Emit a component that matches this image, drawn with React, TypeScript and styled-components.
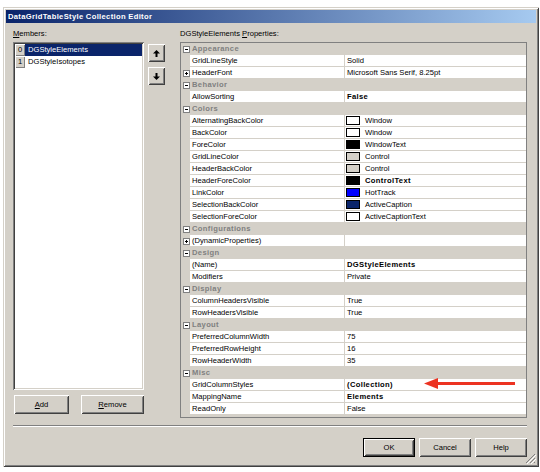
import React from "react";
import styled, { createGlobalStyle, css } from "styled-components";

const GlobalStyle = createGlobalStyle`
  html, body { margin: 0; padding: 0; background: #ffffff; }
  body { font-family: "Liberation Sans", Arial, sans-serif; font-size: 7.6px; color: #000; }
  * { box-sizing: border-box; }
`;

const raised = css`
  box-shadow: inset 1px 1px #ffffff, inset -1px -1px #404040, inset 2px 2px #d4d0c8, inset -2px -2px #808080;
`;

const Window = styled.div`
  position: relative;
  margin: 7px 0 0 3px;
  width: 536px;
  height: 460px;
  padding: 3px;
  background: #d4d0c8;
  box-shadow: inset 1px 1px #d4d0c8, inset -1px -1px #404040, inset 2px 2px #ffffff, inset -2px -2px #808080;
`;

const TitleBar = styled.div`
  height: 13px;
  line-height: 13px;
  padding-left: 2px;
  color: #ffffff;
  font-weight: bold;
  letter-spacing: 0.33px;
  background: linear-gradient(to right, #0a246a, #a6caf0);
  white-space: nowrap;
`;

const Content = styled.div`
  padding: 5px 9px 0 7px;
`;

const Main = styled.div`
  display: flex;
  align-items: flex-start;
`;

const Column = styled.div<{ $width: number; $ml?: number }>`
  width: ${(p) => p.$width}px;
  margin-left: ${(p) => p.$ml ?? 0}px;
  display: flex;
  flex-direction: column;
`;

const Label = styled.div`
  height: 11px;
  line-height: 11px;
  margin-bottom: 3px;
  white-space: nowrap;
`;

const ListBox = styled.div`
  height: 348px;
  padding: 2px;
  background: #ffffff;
  box-shadow: inset 1px 1px #808080, inset -1px -1px #ffffff, inset 2px 2px #404040, inset -2px -2px #d4d0c8;
`;

const ListRow = styled.div`
  display: flex;
  height: 12px;
`;

const IndexCell = styled.div`
  width: 10px;
  height: 12px;
  line-height: 12px;
  text-align: center;
  background: #d4d0c8;
  box-shadow: inset 1px 1px #ffffff, inset -1px -1px #808080;
`;

const ItemText = styled.div<{ $selected?: boolean }>`
  flex: 1;
  line-height: 12px;
  padding-left: 3px;
  background: ${(p) => (p.$selected ? "#0a246a" : "#ffffff")};
  color: ${(p) => (p.$selected ? "#ffffff" : "#000000")};
`;

const ButtonRow = styled.div`
  display: flex;
  gap: 12px;
  margin: 5px 0 0 1px;
`;

const Button = styled.button<{ $width: number; $default?: boolean }>`
  width: ${(p) => p.$width}px;
  height: 19px;
  padding: 0;
  border: none;
  background: #d4d0c8;
  font-family: "Liberation Sans", Arial, sans-serif;
  font-size: 7.6px;
  color: #000;
  ${raised}
  ${(p) =>
    p.$default &&
    css`
      box-shadow: inset 0 0 0 1px #000000, inset 2px 2px #ffffff, inset -2px -2px #404040,
        inset 3px 3px #d4d0c8, inset -3px -3px #808080;
    `}
`;

const ArrowColumn = styled.div`
  display: flex;
  flex-direction: column;
  gap: 5px;
  margin: 16px 0 0 4px;
`;

const ArrowButton = styled.button`
  width: 17px;
  height: 18px;
  padding: 0;
  border: none;
  background: #d4d0c8;
  display: flex;
  align-items: center;
  justify-content: center;
  ${raised}
`;

const Grid = styled.div`
  position: relative;
  height: 376px;
  border: 1px solid #808080;
  background: #d4d0c8;
  overflow: hidden;
`;

const CategoryRow = styled.div`
  display: flex;
  align-items: center;
  height: 12px;
  background: #d4d0c8;
`;

const Gutter = styled.div`
  width: 9px;
  height: 12px;
  flex: none;
  display: flex;
  align-items: center;
  padding-left: 2px;
`;

const ExpandBox = styled.div<{ $plus?: boolean }>`
  position: relative;
  width: 7px;
  height: 7px;
  border: 1px solid #808080;
  background: #ffffff;
  &::before {
    content: "";
    position: absolute;
    left: 1px;
    top: 2px;
    width: 3px;
    height: 1px;
    background: #000;
  }
  &::after {
    content: "";
    display: ${(p) => (p.$plus ? "block" : "none")};
    position: absolute;
    left: 2px;
    top: 1px;
    width: 1px;
    height: 3px;
    background: #000;
  }
`;

const CategoryText = styled.div`
  padding-left: 2px;
  line-height: 12px;
  font-weight: bold;
  color: #808080;
  letter-spacing: 0.35px;
`;

const PropRow = styled.div`
  display: flex;
  height: 12px;
`;

const NameCell = styled.div`
  width: 155px;
  flex: none;
  height: 12px;
  line-height: 11px;
  padding-left: 2px;
  background: #ffffff;
  border-right: 1px solid #d4d0c8;
  border-bottom: 1px solid #d4d0c8;
  white-space: nowrap;
  overflow: hidden;
`;

const ValueCell = styled.div<{ $bold?: boolean; $swatch?: boolean }>`
  flex: 1;
  height: 12px;
  line-height: 11px;
  display: flex;
  align-items: center;
  padding-left: ${(p) => (p.$swatch ? 1 : 2)}px;
  background: #ffffff;
  border-bottom: 1px solid #d4d0c8;
  white-space: nowrap;
  overflow: hidden;
  font-weight: ${(p) => (p.$bold ? "bold" : "normal")};
  letter-spacing: ${(p) => (p.$bold ? "0.35px" : "0")};
`;

const Swatch = styled.span<{ $color: string }>`
  width: 14px;
  height: 9px;
  flex: none;
  margin-right: 5px;
  border: 1px solid #000000;
  background: ${(p) => p.$color};
`;

const Separator = styled.div`
  margin-top: 7px;
  height: 2px;
  border-top: 1px solid #808080;
  border-bottom: 1px solid #ffffff;
`;

const Footer = styled.div`
  display: flex;
  justify-content: flex-end;
  gap: 4px;
  margin-top: 11px;
`;

const Pointer = styled.svg`
  position: absolute;
  left: 242px;
  top: 334px;
`;

const Grip = styled.svg`
  position: absolute;
  right: 3px;
  bottom: 3px;
`;

type Row =
  | { cat: string }
  | { name: string; value?: string; bold?: boolean; swatch?: string; plus?: boolean };

const rows: Row[] = [
  { cat: "Appearance" },
  { name: "GridLineStyle", value: "Solid" },
  { name: "HeaderFont", value: "Microsoft Sans Serif, 8.25pt", plus: true },
  { cat: "Behavior" },
  { name: "AllowSorting", value: "False", bold: true },
  { cat: "Colors" },
  { name: "AlternatingBackColor", value: "Window", swatch: "#ffffff" },
  { name: "BackColor", value: "Window", swatch: "#ffffff" },
  { name: "ForeColor", value: "WindowText", swatch: "#000000" },
  { name: "GridLineColor", value: "Control", swatch: "#d4d0c8" },
  { name: "HeaderBackColor", value: "Control", swatch: "#d4d0c8" },
  { name: "HeaderForeColor", value: "ControlText", swatch: "#000000", bold: true },
  { name: "LinkColor", value: "HotTrack", swatch: "#0000ff" },
  { name: "SelectionBackColor", value: "ActiveCaption", swatch: "#0a246a" },
  { name: "SelectionForeColor", value: "ActiveCaptionText", swatch: "#ffffff" },
  { cat: "Configurations" },
  { name: "(DynamicProperties)", value: "", plus: true },
  { cat: "Design" },
  { name: "(Name)", value: "DGStyleElements", bold: true },
  { name: "Modifiers", value: "Private" },
  { cat: "Display" },
  { name: "ColumnHeadersVisible", value: "True" },
  { name: "RowHeadersVisible", value: "True" },
  { cat: "Layout" },
  { name: "PreferredColumnWidth", value: "75" },
  { name: "PreferredRowHeight", value: "16" },
  { name: "RowHeaderWidth", value: "35" },
  { cat: "Misc" },
  { name: "GridColumnStyles", value: "(Collection)", bold: true },
  { name: "MappingName", value: "Elements", bold: true },
  { name: "ReadOnly", value: "False" },
];

const UpArrow = () => (
  <svg width="7" height="7" viewBox="0 0 7 7">
    <polygon points="3.5,0 7,3.5 0,3.5" fill="#000" />
    <rect x="2.5" y="3" width="2" height="4" fill="#000" />
  </svg>
);

const DownArrow = () => (
  <svg width="7" height="7" viewBox="0 0 7 7">
    <polygon points="3.5,7 7,3.5 0,3.5" fill="#000" />
    <rect x="2.5" y="0" width="2" height="4" fill="#000" />
  </svg>
);

export default function App() {
  return (
    <>
      <GlobalStyle />
      <Window>
        <TitleBar>DataGridTableStyle Collection Editor</TitleBar>
        <Content>
          <Main>
            <Column $width={131}>
              <Label>
                <u>M</u>embers:
              </Label>
              <ListBox>
                <ListRow>
                  <IndexCell>0</IndexCell>
                  <ItemText $selected>DGStyleElements</ItemText>
                </ListRow>
                <ListRow>
                  <IndexCell>1</IndexCell>
                  <ItemText>DGStyleIsotopes</ItemText>
                </ListRow>
              </ListBox>
              <ButtonRow>
                <Button $width={55}>
                  <u>A</u>dd
                </Button>
                <Button $width={63}>
                  <u>R</u>emove
                </Button>
              </ButtonRow>
            </Column>
            <ArrowColumn>
              <ArrowButton>
                <UpArrow />
              </ArrowButton>
              <ArrowButton>
                <DownArrow />
              </ArrowButton>
            </ArrowColumn>
            <Column $width={347} $ml={15}>
              <Label>
                DGStyleElements <u>P</u>roperties:
              </Label>
              <Grid>
                {rows.map((r, i) =>
                  "cat" in r ? (
                    <CategoryRow key={i}>
                      <Gutter>
                        <ExpandBox />
                      </Gutter>
                      <CategoryText>{r.cat}</CategoryText>
                    </CategoryRow>
                  ) : (
                    <PropRow key={i}>
                      <Gutter>{r.plus && <ExpandBox $plus />}</Gutter>
                      <NameCell>{r.name}</NameCell>
                      <ValueCell $bold={r.bold} $swatch={!!r.swatch}>
                        {r.swatch && <Swatch $color={r.swatch} />}
                        {r.value}
                      </ValueCell>
                    </PropRow>
                  )
                )}
                <Pointer width="93" height="13" viewBox="0 0 93 13">
                  <polygon points="1,6.5 15,1 15,12" fill="#ec3322" />
                  <rect x="14" y="5" width="78" height="3" fill="#ec3322" />
                </Pointer>
              </Grid>
            </Column>
          </Main>
          <Separator />
          <Footer>
            <Button $width={52} $default>
              OK
            </Button>
            <Button $width={52}>Cancel</Button>
            <Button $width={52}>Help</Button>
          </Footer>
        </Content>
        <Grip width="11" height="11" viewBox="0 0 11 11">
          <line x1="10" y1="1" x2="1" y2="10" stroke="#808080" />
          <line x1="10" y1="5" x2="5" y2="10" stroke="#808080" />
          <line x1="10" y1="9" x2="9" y2="10" stroke="#808080" />
          <line x1="11" y1="2" x2="2" y2="11" stroke="#ffffff" />
          <line x1="11" y1="6" x2="6" y2="11" stroke="#ffffff" />
        </Grip>
      </Window>
    </>
  );
}
